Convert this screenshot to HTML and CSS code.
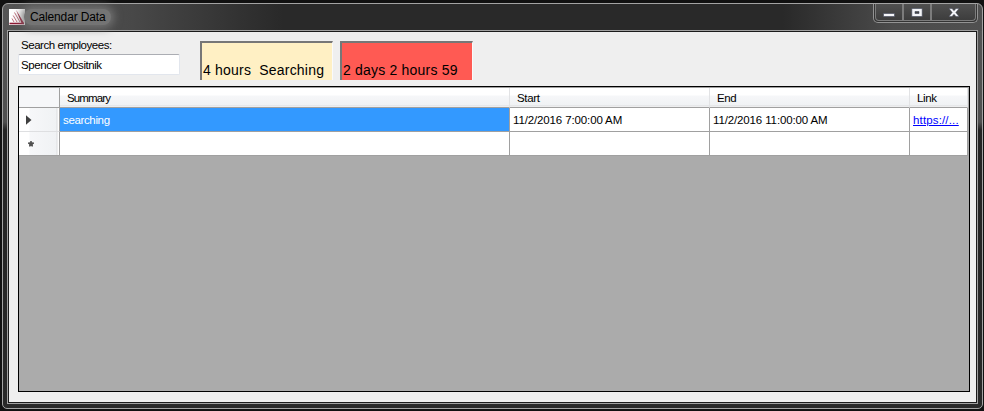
FILE: index.html
```html
<!DOCTYPE html>
<html lang="en">
<head>
<meta charset="utf-8">
<title>Calendar Data</title>
<link rel="stylesheet" href="styles.css">
</head>
<body>
<div class="window">
  <header class="titlebar">
    <svg class="app-icon" width="16" height="16" viewBox="0 0 16 16">
      <rect width="16" height="16" fill="#fff"/>
      <path d="M.5 14.500H15" stroke="#8e1732" stroke-width="1.600"/>
      <path d="M7 .8L15 14H12.500Z" fill="#9c1c38"/>
      <path d="M5.500 3.500L11 13M4.200 6.500L8 13M3 9.500L5 13" stroke="#b8606f" stroke-width=".9" fill="none"/>
    </svg>
    <h1 class="title">Calendar Data</h1>
    <div class="controls">
      <span class="control"><svg width="12" height="9" viewBox="0 0 12 9"><path d="M.5 5.500h11v3H.5z" fill="#f4f5f8" stroke="#424759" stroke-width=".6"/></svg></span>
      <span class="control"><svg width="12" height="9" viewBox="0 0 12 9"><path fill-rule="evenodd" d="M.8.5h10.400v8H.8zM4 3.500v2h4v-2z" fill="#f4f5f8" stroke="#424759" stroke-width=".6"/></svg></span>
      <span class="control close"><svg width="12" height="9" viewBox="0 0 12 9"><path d="M1 .5h3l2 2.200L8 .5h3L7.800 4.500 11 8.500H8L6 6.300 4 8.500H1l3.200-4z" fill="#f4f5f8" stroke="#424759" stroke-width=".5"/></svg></span>
    </div>
  </header>
  <main class="client">
    <section class="toolbar">
      <div class="search">
        <label class="label" for="employee">Search employees:</label>
        <input class="field" id="employee" value="Spencer Obsitnik">
      </div>
      <div class="status searching">4 hours&nbsp; Searching</div>
      <div class="status overdue">2 days 2 hours 59</div>
    </section>
    <section class="grid">
      <div class="row head">
        <div class="corner"></div><div class="summary">Summary</div><div>Start</div><div>End</div><div>Link</div>
      </div>
      <div class="row">
        <div class="handle"><svg width="6" height="10" viewBox="0 0 6 10"><path d="M0 .3L5.500 5 0 9.700z" fill="#404040"/></svg></div>
        <div class="selected">searching</div><div class="date">11/2/2016 7:00:00 AM</div><div class="date">11/2/2016 11:00:00 AM</div><div><a class="link">https://...</a></div>
      </div>
      <div class="row">
        <div class="handle new"><svg width="6" height="6" viewBox="0 0 6 6"><path d="M2.200 0h1.600v1.200L6 1.500v1.200l-1.200.6.2 1.900-1 .6L3 4.700l-1 1.100-1-.6.2-1.900L0 2.700V1.500l2.200-.3z" fill="#505050"/></svg></div>
        <div></div><div></div><div></div><div></div>
      </div>
    </section>
  </main>
</div>
</body>
</html>
```
FILE: styles.css
```css
* { box-sizing: border-box; }

body {
  margin: 0;
  padding: 3px 1px 2px 2px;
  height: 411px;
  overflow: hidden;
  background: #111;
  font: 11.5px/14px "Liberation Sans", sans-serif;
  color: #000;
}

.window {
  height: 406px;
  padding: 0 5px 4px;
  border: 1px solid #a3a3a3;
  border-radius: 6px 6px 5px 5px;
  background:
    linear-gradient(90deg, #555 0, #484848 130px, #292929 280px, #292929 780px, #4b4b4b 890px, #505050 100%) top / 100% 27px no-repeat,
    linear-gradient(#555 0, #505050 118px, #242424 126px, #292929 100%);
}

.titlebar {
  display: flex;
  height: 27px;
  padding-left: 1px;
}

.app-icon { margin-top: 5px; }

.title {
  margin: 5px 0 0 -1px;
  padding: 1px 6px;
  height: 16px;
  font: 12px/14px "Liberation Sans", sans-serif;
  letter-spacing: -.15px;
  white-space: nowrap;
  border-radius: 8px;
  background: #747474;
  box-shadow: 0 0 8px 3px #747474;
}

.controls {
  display: flex;
  margin: 0 -1px 0 auto;
  width: 105px;
  height: 19px;
  padding: 0 1px 1px;
  border: 1px solid #939393;
  border-top: 0;
  border-radius: 0 0 5px 5px;
  background: #333;
}

.control {
  display: flex;
  justify-content: center;
  width: 28px;
  height: 17px;
  padding-top: 4px;
  border: 1px solid #7c7c7c;
  border-top: 0;
  background: linear-gradient(#505050, #3d3d3d);
}

.control:first-child { border-radius: 0 0 0 4px; }
.control.close { flex: 1; border-radius: 0 0 4px 0; }

.client {
  height: 372px;
  padding: 8px 6px 10px 9px;
  border: 1px solid #1b1b1b;
  outline: 1px solid #a0a0a0;
  background: #efefef;
}

.toolbar {
  display: flex;
  height: 46px;
}

.search { width: 182px; }

.label {
  display: block;
  height: 16px;
  padding-left: 3px;
  margin-top: -2px;
  line-height: 14px;
  letter-spacing: -.45px;
}

.field {
  display: block;
  width: 162px;
  height: 21px;
  padding: 0 2px;
  border: 1px solid #e2e6ed;
  border-top-color: #abadb3;
  border-radius: 2px;
  background: #fff;
  font: 11.5px/14px "Liberation Sans", sans-serif;
  letter-spacing: -.43px;
  color: #000;
}

.status {
  width: 133px;
  height: 39px;
  margin: 1px 7px 0 0;
  padding: 19px 0 0 1px;
  border: solid #777;
  border-width: 2px 1px 0 2px;
  border-right-color: #fafafa;
  font-size: 14px;
  line-height: 17px;
  letter-spacing: .2px;
  white-space: nowrap;
}

.searching { background: #fff0c4; }
.overdue { background: #ff5a53; }

.grid {
  width: 952px;
  height: 306px;
  border: 1px solid #000;
  background: #ababab;
}

.row {
  display: grid;
  grid-template-columns: 41px 450px 200px 200px 58px;
  width: 949px;
  height: 24px;
  background: #fff;
}

.row > div {
  height: 24px;
  padding: 5px 0 0 3px;
  border-right: 1px solid #a0a0a0;
  border-bottom: 1px solid #a0a0a0;
  white-space: nowrap;
  overflow: hidden;
}

.row.head { height: 21px; border-top: 1px solid #a0a0a0; }

.row.head > div {
  height: 20px;
  padding: 3px 0 0 7px;
  border-right-color: #e2e3e5;
  letter-spacing: -.35px;
  background: linear-gradient(#fff 0, #fff 7px, #f6f7f9 8px, #f0f2f4 17px, #dcdddf 18px, #fff 19px);
}

.row.head > .summary { letter-spacing: -.85px; }

.row.head > .corner {
  border-right-color: #a0a0a0;
  background: #f6f7f9;
}

.row > .handle {
  padding: 7px 0 0 7px;
  border-bottom-color: #dedfe1;
  background: linear-gradient(90deg, #fff 0, #fff 10px, #f6f7f9 11px, #f0f2f4 37px, #dcdddf 38px, #fff 39px);
}

.row > .new { padding: 9px 0 0 9px; border-bottom-color: #a0a0a0; }
.row > .handle svg { display: block; }
.row > .selected { background: #3399ff; color: #fff; letter-spacing: -.35px; }
.row > .date { letter-spacing: -.13px; }
.link { color: #00f; text-decoration: underline; letter-spacing: .15px; }
```
